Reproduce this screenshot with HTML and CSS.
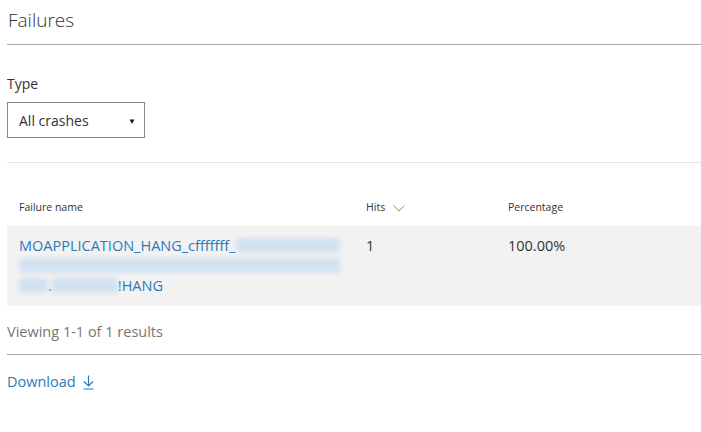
FILE: index.html
```html
<!DOCTYPE html>
<html lang="en">
<head>
    <meta charset="UTF-8">
    <title>Failures</title>
    <link rel="stylesheet" href="styles.css">
</head>
<body>
    <div class="page">
        <h2 class="title">Failures</h2>

        <div class="filter">
            <label class="filter-label">Type</label>
            <div class="select">
                <span>All crashes</span>
                <span class="select-arrow">&#9660;</span>
            </div>
        </div>

        <div class="results">
            <div class="grid head">
                <div class="cell">Failure name</div>
                <div class="cell">Hits
                    <svg class="sort" width="12" height="7" viewBox="0 0 12 7">
                        <polyline points="0.5,0.5 6,6 11.5,0.5" fill="none" stroke="#888" stroke-width="1"/>
                    </svg>
                </div>
                <div class="cell">Percentage</div>
            </div>
            <div class="grid row">
                <div class="cell name">
                    <a href="#">MOAPPLICATION_HANG_cfffffff_<span class="redact w1"></span><span class="redact w2"></span><span class="redact w3"></span>.<span class="redact w4"></span>!HANG</a>
                </div>
                <div class="cell">1</div>
                <div class="cell">100.00%</div>
            </div>
        </div>

        <div class="summary">Viewing 1-1 of 1 results</div>

        <a class="download" href="#">Download
            <svg width="11" height="15" viewBox="0 0 11 15">
                <path d="M5.5 0.5 V11 M1 6.5 L5.5 11 L10 6.5 M0.5 14 H10.5" fill="none" stroke="#2b79bd" stroke-width="1.2"/>
            </svg>
        </a>
    </div>
</body>
</html>
```

FILE: styles.css
```css
* {
    margin: 0;
    padding: 0;
    box-sizing: border-box;
}

body {
    font-family: "Open Sans", "Noto Sans", sans-serif;
    color: #333;
    background: white;
}

.page {
    padding-left: 7px;
}

.title {
    font-size: 19px;
    font-weight: 300;
    line-height: 26px;
    padding: 7px 0 11px 1px;
    border-bottom: 1px solid #a9a9a9;
}

.filter {
    padding-top: 29px;
    padding-bottom: 24px;
    border-bottom: 1px solid #e6e6e6;
}

.filter-label {
    display: block;
    font-size: 14px;
    line-height: 20px;
    margin-bottom: 8px;
}

.select {
    width: 138px;
    height: 36px;
    border: 1px solid #8a8a8a;
    display: flex;
    align-items: center;
    justify-content: space-between;
    padding: 0 8px 0 11px;
    font-size: 14px;
}

.select-arrow {
    font-size: 8px;
    color: #111;
}

.results {
    padding-top: 24px;
}

.grid {
    display: grid;
    grid-template-columns: 347px 142px 1fr;
}

.head {
    font-size: 10.5px;
    height: 39px;
    align-items: center;
}

.head .cell {
    padding: 0 12px;
    display: flex;
    align-items: center;
}

.sort {
    margin-left: 8px;
    margin-top: 3px;
}

.row {
    background: #f2f2f2;
    font-size: 14.5px;
    line-height: 20px;
    padding: 10px 0;
}

.row .cell {
    padding: 0 12px;
}

.name {
    padding-right: 8px !important;
}

.name a {
    color: #2b79bd;
    text-decoration: none;
}

.redact {
    display: inline-block;
    height: 15px;
    vertical-align: -2px;
    background: #d3e2f1;
    filter: blur(2px);
    border-radius: 3px;
}

.w1 { width: 104px; }
.w2 { width: 321px; }
.w3 { width: 29px; }
.w4 { width: 66px; }

.summary {
    font-size: 14.5px;
    color: #767676;
    line-height: 20px;
    padding: 16px 0 12px;
    border-bottom: 1px solid #a9a9a9;
}

.download {
    display: inline-flex;
    align-items: center;
    gap: 7px;
    margin-top: 17px;
    font-size: 14.5px;
    line-height: 20px;
    color: #2b79bd;
    text-decoration: none;
}
```
